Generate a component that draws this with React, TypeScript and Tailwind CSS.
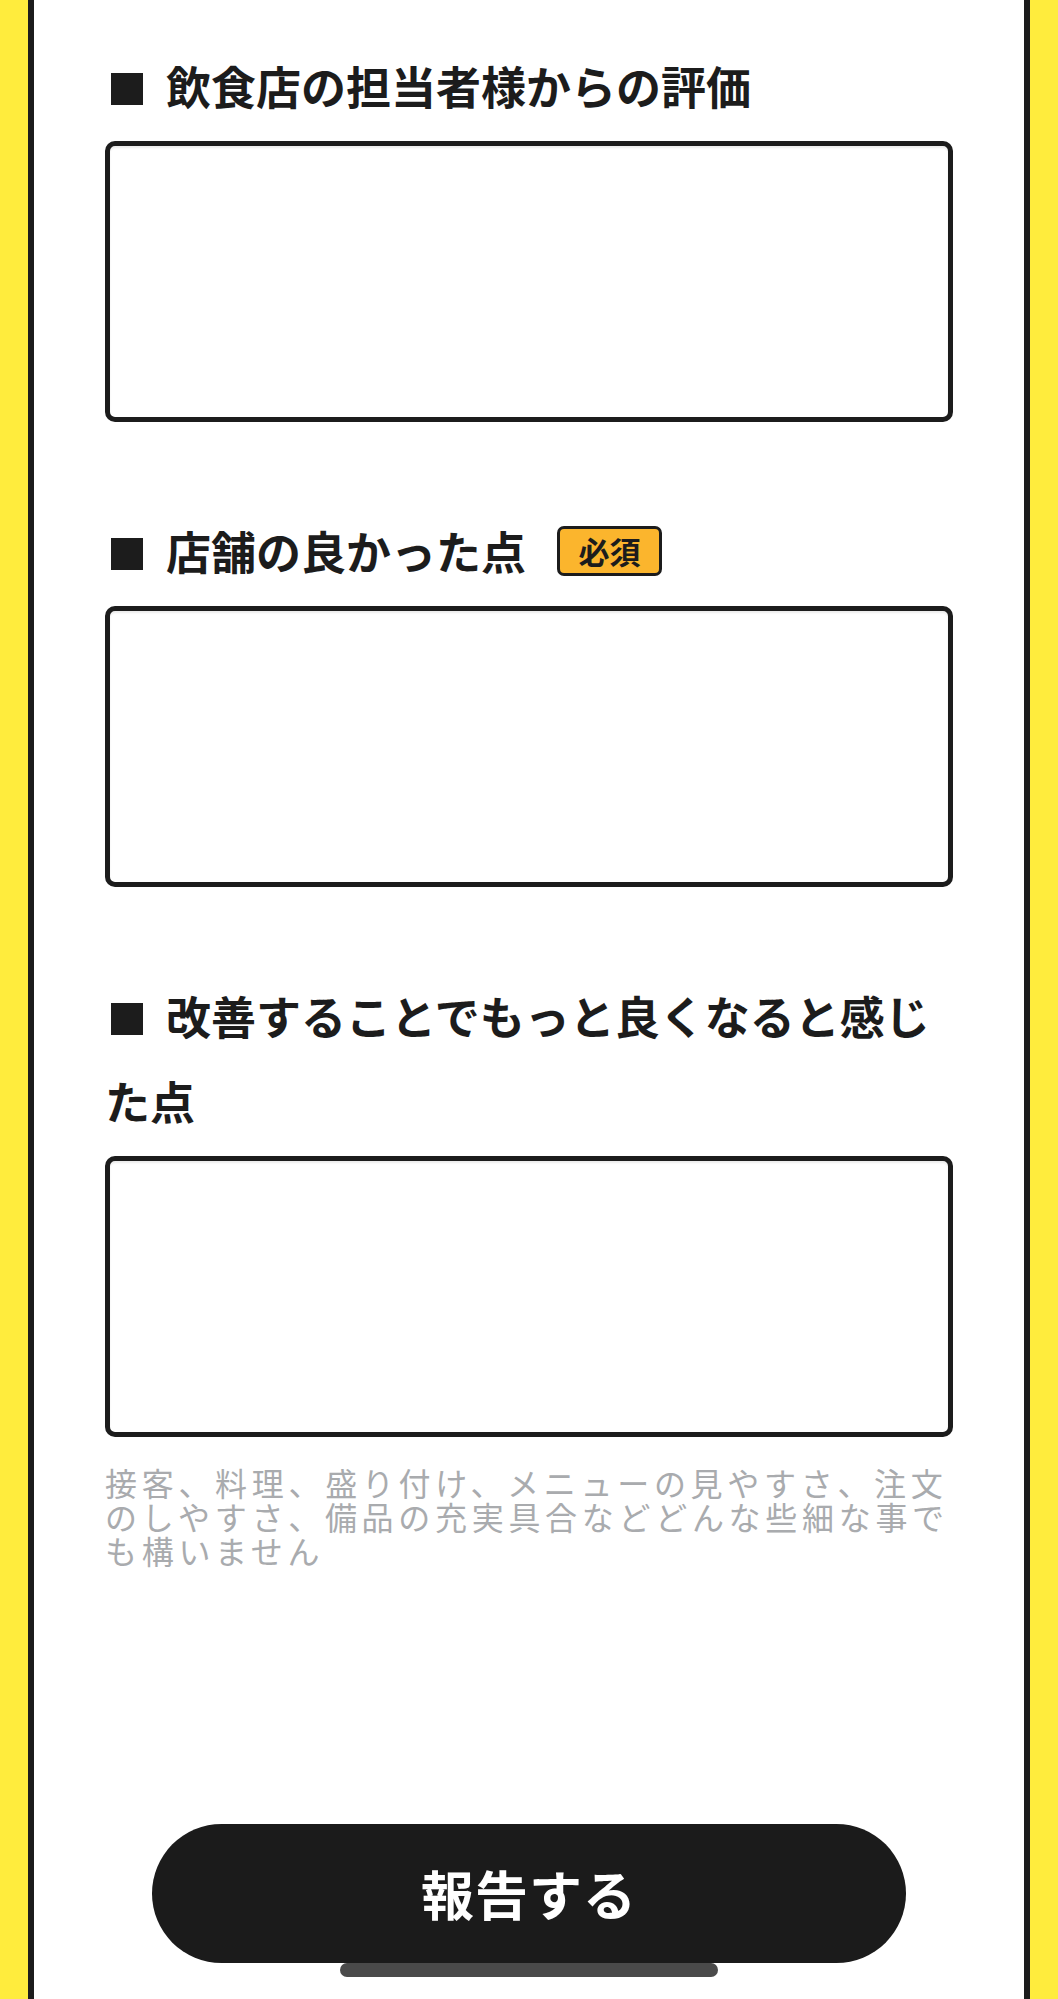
import React from 'react';

const Square = () => (
  <span aria-hidden className="relative -top-[4px] inline-block align-middle ml-[6px] mr-[23px] w-[32px] h-[32px] bg-[#1c1c1c]" />
);

const Heading = ({ children }: { children: React.ReactNode }) => (
  <h2 className="text-[45px] leading-[85px] font-bold text-[#1c1c1c] mb-[13px]">
    <Square />
    {children}
  </h2>
);

const Field = () => (
  <textarea className="block w-full h-[281px] border-[5px] border-[#1c1c1c] rounded-[10px] bg-white resize-none shadow-[inset_0_2px_2px_rgba(0,0,0,0.08)] outline-none" />
);

const App = () => {
  return (
    <div className="relative h-[1999px] overflow-hidden bg-[#ffec3d] px-[28px] font-['Noto_Sans_CJK_JP',sans-serif]">
      <div className="h-full bg-white border-x-[6px] border-[#1c1c1c] px-[71px] pt-[43px]">
        {/* 担当者様からの評価 */}
        <section>
          <Heading>飲食店の担当者様からの評価</Heading>
          <Field />
        </section>

        {/* 良かった点 */}
        <section className="mt-[86px]">
          <div className="flex items-center mb-[13px]">
            <h2 className="text-[45px] leading-[85px] font-bold text-[#1c1c1c]">
              <Square />
              店舗の良かった点
            </h2>
            <span className="ml-[31px] flex items-center justify-center w-[105px] h-[50px] rounded-[7px] border-[3px] border-[#1c1c1c] bg-[#fbb52d] text-[31px] leading-none font-bold text-[#1c1c1c]">
              必須
            </span>
          </div>
          <Field />
        </section>

        {/* 改善点 */}
        <section className="mt-[86px]">
          <Heading>改善することでもっと良くなると感じた点</Heading>
          <Field />
          <p className="mt-[28px] text-[32px] leading-[34px] tracking-[4.7px] text-[#a9abae]">
            接客、料理、盛り付け、メニューの見やすさ、注文のしやすさ、備品の充実具合などどんな些細な事でも構いません
          </p>
        </section>

        <div className="flex justify-center mt-[257px]">
          <button className="w-[754px] h-[139px] rounded-full bg-[#1b1b1b] text-white text-[53px] font-bold tracking-[1px]">
            報告する
          </button>
        </div>
      </div>

      {/* home indicator */}
      <div className="absolute left-1/2 -translate-x-1/2 bottom-[22px] w-[378px] h-[14px] rounded-full bg-[#4a4a4a]" />
    </div>
  );
};

export default App;
